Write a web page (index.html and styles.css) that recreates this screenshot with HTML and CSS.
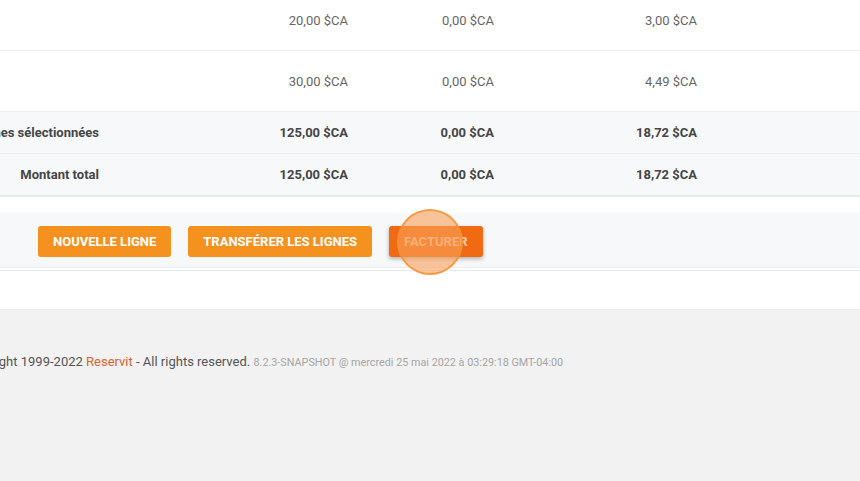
FILE: index.html
```html
<!DOCTYPE html>
<html lang="fr">

<head>
  <meta charset="UTF-8">
  <meta name="viewport" content="width=device-width, initial-scale=1.0">
  <title>Facturation</title>
  <link rel="stylesheet" href="styles.css">
</head>

<body>
  <div class="panel">
    <div class="totals">
      <div class="row">
        <div class="cell label"></div>
        <div class="cell">20,00 $CA</div>
        <div class="cell">0,00 $CA</div>
        <div class="cell">3,00 $CA</div>
        <div class="cell"></div>
      </div>
      <div class="row">
        <div class="cell label"></div>
        <div class="cell">30,00 $CA</div>
        <div class="cell">0,00 $CA</div>
        <div class="cell">4,49 $CA</div>
        <div class="cell"></div>
      </div>
      <div class="row sum">
        <div class="cell label">Total des lignes sélectionnées</div>
        <div class="cell">125,00 $CA</div>
        <div class="cell">0,00 $CA</div>
        <div class="cell">18,72 $CA</div>
        <div class="cell"></div>
      </div>
      <div class="row sum last">
        <div class="cell label">Montant total</div>
        <div class="cell">125,00 $CA</div>
        <div class="cell">0,00 $CA</div>
        <div class="cell">18,72 $CA</div>
        <div class="cell"></div>
      </div>
    </div>

    <div class="toolbar">
      <button class="btn">Nouvelle ligne</button>
      <button class="btn">Transférer les lignes</button>
      <button class="btn btn-dark">Facturer<span class="click"></span></button>
    </div>

    <div class="spacer"></div>
  </div>

  <footer class="footer">
    Copyright 1999-2022 <a href="#">Reservit</a> - All rights reserved.
    <span class="version">8.2.3-SNAPSHOT @ mercredi 25 mai 2022 à 03:29:18 GMT-04:00</span>
  </footer>
</body>

</html>
```

FILE: styles.css
```css
body {
  font-family: Roboto, "Liberation Sans", sans-serif;
  font-size: 13px;
  margin: 0;
  background-color: #f2f2f2;
  overflow: hidden;
}

.panel {
  background-color: #fff;
  margin-top: -10px;
  border-bottom: 1px solid #ebebeb;
}

.totals {
  border-bottom: 2px solid #e9e9e9;
}

.row {
  display: grid;
  grid-template-columns: 110px 249px 146px 203px 1fr;
  height: 60px;
  border-bottom: 1px solid #ededed;
  color: #666;
}

.row.sum {
  height: 41px;
  background-color: #f7f8fa;
  font-weight: bold;
  color: #454545;
}

.row.last {
  border-bottom: none;
}

.cell {
  display: flex;
  align-items: center;
  justify-content: flex-end;
  padding-right: 11px;
  white-space: nowrap;
}

.toolbar {
  display: flex;
  align-items: flex-start;
  column-gap: 17px;
  margin-top: 16px;
  height: 41px;
  padding: 13px 0 0 38px;
  background-color: #f7f8fa;
  border-bottom: 1px solid #ececec;
}

.btn {
  position: relative;
  height: 31px;
  padding: 0 15px;
  border: none;
  border-radius: 3px;
  background-color: #f5921f;
  color: #fff;
  font-family: inherit;
  font-size: 13px;
  font-weight: bold;
  text-transform: uppercase;
  cursor: pointer;
}

.btn-dark {
  background-color: #ef6a12;
  color: #f9c7a1;
  box-shadow: 0 2px 4px rgba(0, 0, 0, 0.3);
}

.click {
  position: absolute;
  left: 8px;
  top: -17px;
  width: 62px;
  height: 62px;
  border-radius: 50%;
  background-color: rgba(250, 160, 90, 0.6);
  border: 2px solid rgba(247, 145, 50, 0.85);
}

.spacer {
  height: 38px;
  border-top: 1px solid #ebebeb;
  margin-top: 2px;
}

.footer {
  margin-top: 44px;
  margin-left: -38px;
  color: #555;
  white-space: nowrap;
}

.footer a {
  color: #e0622d;
  text-decoration: none;
}

.version {
  font-size: 10.8px;
  color: #a5a5a5;
}
```
